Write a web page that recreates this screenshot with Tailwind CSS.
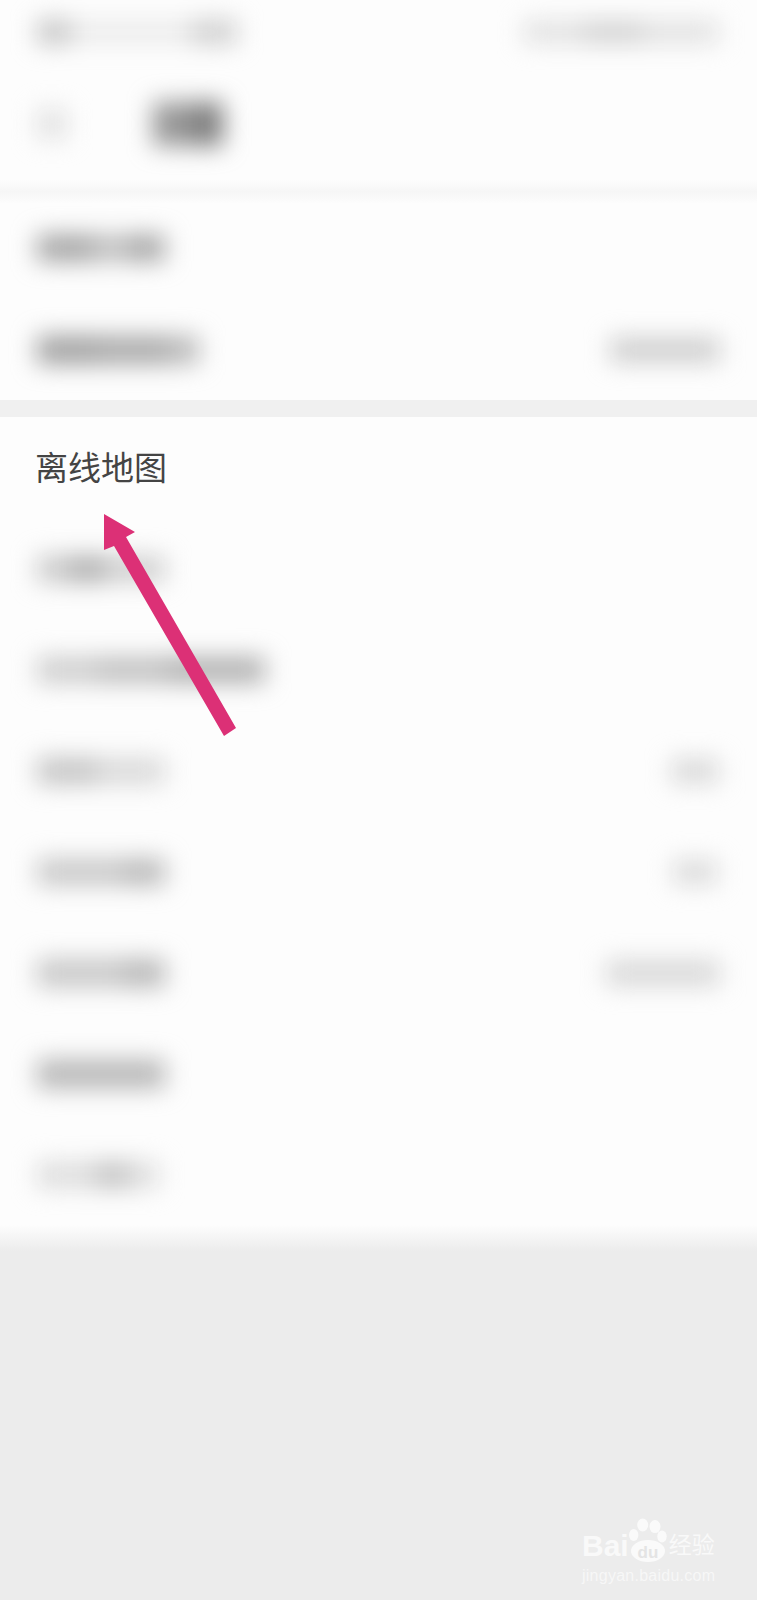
<!DOCTYPE html>
<html lang="zh-CN">
<head>
  <meta charset="UTF-8" />
  <meta name="viewport" content="width=device-width, initial-scale=1.0"/>
  <title>离线地图</title>
  <script src="https://cdn.jsdelivr.net/npm/@tailwindcss/browser@4"></script>
</head>
<body class="bg-[#ececec] font-['Liberation_Sans','Noto_Sans_CJK_SC',sans-serif]">
  <div class="relative w-[757px] h-[1600px] overflow-hidden">

    <!-- top block -->
    <div class="bg-[#fdfdfd]">
      <div class="h-[64px] px-[37px] flex items-center justify-between">
        <div class="flex h-[24px] w-[200px] blur-[12px]">
          <div class="w-[34px] bg-[#c4c4c4]"></div>
          <div class="flex-1 bg-[#ececec]"></div>
          <div class="w-[46px] bg-[#cecece]"></div>
        </div>
        <div class="flex h-[22px] w-[196px] mr-[1px] blur-[12px]">
          <div class="w-[60px] bg-[#e0e0e0]"></div>
          <div class="w-[60px] bg-[#d0d0d0]"></div>
          <div class="flex-1 bg-[#e0e0e0]"></div>
        </div>
      </div>
      <div class="h-[116px] pt-[4px] px-[37px] flex items-center gap-[86px]">
        <div class="w-[30px] h-[30px] bg-[#e2e2e2] blur-[12px]"></div>
        <div class="flex w-[70px] h-[44px] blur-[12px]">
          <div class="flex-1 bg-[#969696]"></div>
          <div class="w-[30px] bg-[#7c7c7c]"></div>
        </div>
      </div>
    </div>

    <!-- soft divider -->
    <div class="h-[24px] bg-linear-to-b from-[#fdfdfd] via-[#f6f6f6] to-[#fdfdfd]"></div>

    <!-- second block -->
    <div class="bg-[#fdfdfd]">
      <div class="h-[96px] pb-[8px] px-[37px] flex items-center">
        <div class="flex h-[26px] w-[128px] blur-[12px]">
          <div class="w-[56px] bg-[#a0a0a0]"></div>
          <div class="w-[36px] bg-[#bcbcbc]"></div>
          <div class="flex-1 bg-[#a2a2a2]"></div>
        </div>
      </div>
      <div class="h-[100px] px-[37px] flex items-center justify-between">
        <div class="flex h-[28px] w-[162px] blur-[12px]">
          <div class="w-[60px] bg-[#9e9e9e]"></div>
          <div class="flex-1 bg-[#a6a6a6]"></div>
          <div class="w-[30px] bg-[#b8b8b8]"></div>
        </div>
        <div class="h-[24px] w-[110px] bg-[#cccccc] blur-[12px]"></div>
      </div>
    </div>

    <!-- hard divider -->
    <div class="h-[17px] bg-[#f0f0f0]"></div>

    <!-- list -->
    <div class="bg-[#fdfdfd]">
      <div class="h-[101px] pt-[1px] px-[35px] flex items-center">
        <span class="text-[33px] leading-none text-[#444444]">离线地图</span>
      </div>
      <div class="h-[101px] px-[37px] flex items-center">
        <div class="flex h-[26px] w-[128px] blur-[12px]">
          <div class="w-[32px] bg-[#c8c8c8]"></div>
          <div class="w-[36px] bg-[#acacac]"></div>
          <div class="flex-1 bg-[#cecece]"></div>
        </div>
      </div>
      <div class="h-[101px] px-[37px] flex items-center">
        <div class="flex h-[26px] w-[228px] blur-[12px]">
          <div class="w-[60px] bg-[#cccccc]"></div>
          <div class="w-[70px] bg-[#bebebe]"></div>
          <div class="flex-1 bg-[#aeaeae]"></div>
        </div>
      </div>
      <div class="h-[101px] px-[37px] flex items-center justify-between">
        <div class="flex h-[26px] w-[128px] blur-[12px]">
          <div class="w-[60px] bg-[#c2c2c2]"></div>
          <div class="flex-1 bg-[#d8d8d8]"></div>
        </div>
        <div class="h-[24px] w-[48px] mr-[1px] bg-[#d8d8d8] blur-[12px]"></div>
      </div>
      <div class="h-[101px] px-[37px] flex items-center justify-between">
        <div class="flex h-[26px] w-[128px] blur-[12px]">
          <div class="w-[86px] bg-[#c6c6c6]"></div>
          <div class="flex-1 bg-[#b6b6b6]"></div>
        </div>
        <div class="h-[24px] w-[44px] mr-[3px] bg-[#dadada] blur-[12px]"></div>
      </div>
      <div class="h-[101px] px-[37px] flex items-center justify-between">
        <div class="flex h-[28px] w-[128px] blur-[12px]">
          <div class="w-[86px] bg-[#c6c6c6]"></div>
          <div class="flex-1 bg-[#b6b6b6]"></div>
        </div>
        <div class="h-[26px] w-[114px] bg-[#d8d8d8] blur-[12px]"></div>
      </div>
      <div class="h-[101px] px-[37px] flex items-center">
        <div class="h-[28px] w-[128px] bg-[#b4b4b4] blur-[12px]"></div>
      </div>
      <div class="h-[101px] px-[37px] flex items-center">
        <div class="flex h-[26px] w-[122px] blur-[12px]">
          <div class="w-[58px] bg-[#dcdcdc]"></div>
          <div class="w-[36px] bg-[#c2c2c2]"></div>
          <div class="flex-1 bg-[#dedede]"></div>
        </div>
      </div>
    </div>
    <div class="h-[26px] bg-linear-to-b from-[#fdfdfd] to-[#ececec]"></div>

    <!-- arrow annotation -->
    <svg class="absolute left-0 top-0" width="757" height="800" viewBox="0 0 757 800">
      <polygon fill="#dc3076" points="104,514 135,532 126,537 236,728 224,736 114,546 104,550"/>
    </svg>

    <!-- watermark -->
    <div class="absolute left-[582px] top-[1518px] w-[134px]">
      <div class="flex items-end h-[44px]">
        <span class="text-[30px] leading-[33px] font-bold text-white/70">Bai</span>
        <svg class="shrink-0" width="42" height="44" viewBox="0 0 42 44">
          <g fill="#ffffff" fill-opacity="0.75">
            <ellipse cx="13.7" cy="7" rx="5.5" ry="6.5"/>
            <ellipse cx="26" cy="8.6" rx="5.5" ry="6.5"/>
            <ellipse cx="4.7" cy="17" rx="4.7" ry="6"/>
            <ellipse cx="33" cy="18.6" rx="4.7" ry="6"/>
            <ellipse cx="19" cy="33" rx="17" ry="11"/>
          </g>
          <text x="19" y="40" text-anchor="middle" font-size="17" font-weight="700" fill="#e4e4e4" font-family="Liberation Sans">du</text>
        </svg>
        <span class="-ml-[2px] text-[23px] leading-[33px] text-white/70 whitespace-nowrap">经验</span>
      </div>
      <div class="mt-[5px] text-[16px] leading-[18px] tracking-[0.25px] text-white/60 whitespace-nowrap">jingyan.baidu.com</div>
    </div>
  </div>
</body>
</html>
